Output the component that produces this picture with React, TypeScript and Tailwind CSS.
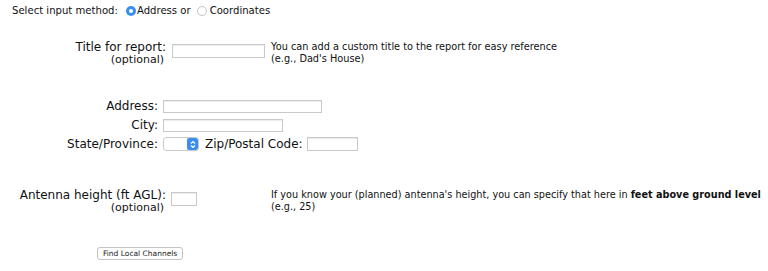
import React from "react"

const font = { fontFamily: '"DejaVu Sans", Verdana, sans-serif' }

const TextBox = ({ className }: { className: string }) => (
  <div className={`border border-[#c9c9c9] bg-white shadow-[inset_0_1px_1px_rgba(0,0,0,0.08)] ${className}`} />
)

const Radio = ({ checked }: { checked?: boolean }) =>
  checked ? (
    <span className="inline-flex h-[10px] w-[10px] items-center justify-center rounded-full bg-[#3b8ef0]">
      <span className="h-[4px] w-[4px] rounded-full bg-white" />
    </span>
  ) : (
    <span className="inline-block h-[10px] w-[10px] rounded-full border border-[#c4c4c4] bg-white" />
  )

const SelectBox = () => (
  <div className="flex h-[14px] w-[36px] overflow-hidden rounded-[3px] border border-[#c9c9c9] bg-white">
    <div className="flex-1" />
    <div className="flex w-[11px] items-center justify-center rounded-[2px] bg-[#3b8ef0]">
      <svg width="6" height="9" viewBox="0 0 6 9" fill="none" stroke="white" strokeWidth="1.2">
        <path d="M1 3.5 L3 1.5 L5 3.5" />
        <path d="M1 5.5 L3 7.5 L5 5.5" />
      </svg>
    </div>
  </div>
)

export default function App() {
  return (
    <div className="h-[271px] w-[768px] overflow-hidden bg-white text-[#111]" style={font}>
      {/* input method */}
      <div className="flex h-[21px] items-center whitespace-nowrap pl-[12px] text-[10.1px]">
        <span>Select input method:</span>
        <span className="ml-[8px] mr-[1px] flex">
          <Radio checked />
        </span>
        <span>Address or</span>
        <span className="ml-[6px] mr-[3px] flex">
          <Radio />
        </span>
        <span>Coordinates</span>
      </div>

      {/* title */}
      <div className="mt-[20px] flex items-start whitespace-nowrap">
        <div className="w-[166px] text-right">
          <div className="text-[12px] leading-[13px]">Title for report:</div>
          <div className="pr-[2px] text-[11px] leading-[12px]">(optional)</div>
        </div>
        <TextBox className="ml-[6px] mt-[3px] h-[14px] w-[93px]" />
        <div className="ml-[6px] text-[9.75px] leading-[12px]">
          <div>You can add a custom title to the report for easy reference</div>
          <div>(e.g., Dad's House)</div>
        </div>
      </div>

      {/* address */}
      <div className="mt-[33px] flex flex-col gap-[5px] whitespace-nowrap text-[12px]">
        <div className="flex h-[14px] items-center">
          <div className="w-[158px] text-right">Address:</div>
          <TextBox className="ml-[5px] h-[13px] w-[159px]" />
        </div>
        <div className="flex h-[14px] items-center">
          <div className="w-[158px] text-right">City:</div>
          <TextBox className="ml-[5px] h-[13px] w-[120px]" />
        </div>
        <div className="flex h-[14px] items-center">
          <div className="w-[158px] text-right">State/Province:</div>
          <div className="ml-[5px]">
            <SelectBox />
          </div>
          <span className="ml-[6px]">Zip/Postal Code:</span>
          <TextBox className="ml-[4px] h-[14px] w-[51px]" />
        </div>
      </div>

      {/* antenna */}
      <div className="mt-[38px] flex items-start whitespace-nowrap">
        <div className="w-[166px] text-right">
          <div className="text-[12px] leading-[13px]">Antenna height (ft AGL):</div>
          <div className="pr-[2px] text-[11px] leading-[12px]">(optional)</div>
        </div>
        <TextBox className="ml-[5px] mt-[3px] h-[14px] w-[26px]" />
        <div className="ml-[74px] text-[9.7px] leading-[12px]">
          <div>
            If you know your (planned) antenna's height, you can specify that here in{" "}
            <b>feet above ground level</b>
          </div>
          <div>(e.g., 25)</div>
        </div>
      </div>

      {/* submit */}
      <div className="mt-[33px] flex pl-[97px]">
        <button
          type="button"
          className="flex h-[13px] items-center rounded-[3px] border border-[#c4c4c4] bg-white px-[5px] text-[7.5px] leading-[11px] text-[#222]"
        >
          Find Local Channels
        </button>
      </div>
    </div>
  )
}
